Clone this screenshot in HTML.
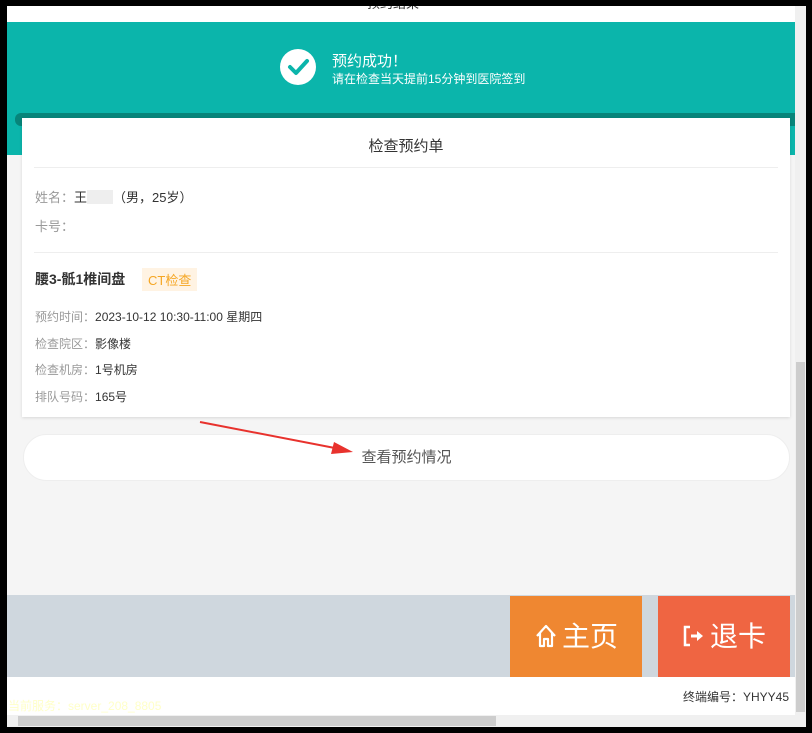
<!DOCTYPE html><html><head><meta charset="utf-8"><style>
*{margin:0;padding:0;box-sizing:border-box}
body{width:812px;height:733px;background:#000;position:relative;overflow:hidden;font-family:"Liberation Sans","Noto Sans CJK SC",sans-serif}
.a{position:absolute}
</style></head><body>
<div class="a" style="left:7px;top:6px;width:788px;height:709px;background:#f5f5f5"></div>
<div class="a" style="left:7px;top:6px;width:788px;height:16px;background:#fff;overflow:hidden"><div class="a" style="left:360px;top:-12px;font-size:13px;color:#333;line-height:20px">预约结果</div></div>
<div class="a" style="left:7px;top:22px;width:788px;height:133px;background:#0bb5ab"></div>
<div class="a" style="left:280px;top:49px;width:36px;height:36px;border-radius:50%;background:#fff"><svg width="36" height="36"><path d="M10 18l6 6 11-12" fill="none" stroke="#0bb5ab" stroke-width="4" stroke-linecap="round" stroke-linejoin="round"/></svg></div>
<div class="a" style="left:332px;top:50px;color:#fff;font-size:15px">预约成功！</div>
<div class="a" style="left:332px;top:70px;color:#fff;font-size:12px">请在检查当天提前15分钟到医院签到</div>
<div class="a" style="left:15px;top:113px;width:780px;height:13px;background:#07857a;border-radius:6px 0 0 6px"></div>
<div class="a" style="left:22px;top:118px;width:768px;height:299px;background:#fff;box-shadow:0 1px 3px rgba(0,0,0,.12)">
<div class="a" style="left:0;top:17px;width:768px;text-align:center;font-size:15px;color:#333">检查预约单</div>
<div class="a" style="left:12px;top:49px;width:744px;height:1px;background:#eee"></div>
<div class="a" style="left:13px;top:69px;font-size:13px;color:#999">姓名：<span style="color:#333">王<span style="display:inline-block;width:26px;height:14px;background:#eee;vertical-align:-2px"></span>（男，25岁）</span></div>
<div class="a" style="left:13px;top:98px;font-size:13px;color:#999">卡号：</div>
<div class="a" style="left:12px;top:134px;width:744px;height:1px;background:#eee"></div>
<div class="a" style="left:13px;top:151px;font-size:14px;font-weight:bold;color:#333">腰3-骶1椎间盘</div>
<div class="a" style="left:120px;top:150px;padding:2px 6px;font-size:13px;color:#f5a623;background:#fff3e3">CT检查</div>
<div class="a" style="left:13px;top:186px;font-size:12px;color:#999;line-height:26.5px">预约时间：<span style="color:#333">2023-10-12 10:30-11:00 星期四</span><br>检查院区：<span style="color:#333">影像楼</span><br>检查机房：<span style="color:#333">1号机房</span><br>排队号码：<span style="color:#333">165号</span></div>
</div>
<div class="a" style="left:23px;top:434px;width:767px;height:47px;background:#fff;border:1px solid #eee;border-radius:24px;text-align:center;line-height:46px;font-size:15px;color:#555">查看预约情况</div>
<svg class="a" style="left:0;top:0" width="812" height="733"><path d="M200 422L340 449" stroke="#e8322d" stroke-width="2"/><path d="M353 452l-19 -10l-3 12z" fill="#e8322d"/></svg>
<div class="a" style="left:7px;top:595px;width:788px;height:82px;background:#cfd7de"></div>
<div class="a" style="left:510px;top:596px;width:132px;height:81px;background:#ef8731;color:#fff;font-size:28px;line-height:81px;text-align:center"><svg width="24" height="26" style="vertical-align:-3px;margin-right:4px"><path d="M3 13L12 3l9 10M6 10v13h4v-7h4v7h4V10" fill="none" stroke="#fff" stroke-width="2.2" stroke-linejoin="round"/></svg>主页</div>
<div class="a" style="left:658px;top:596px;width:132px;height:81px;background:#ef6542;color:#fff;font-size:28px;line-height:81px;text-align:center"><svg width="24" height="26" style="vertical-align:-3px;margin-right:4px"><path d="M8 4H3v18h5" fill="none" stroke="#fff" stroke-width="2.5"/><path d="M9 13h8" stroke="#fff" stroke-width="3"/><path d="M15 8l6 5-6 5z" fill="#fff"/></svg>退卡</div>
<div class="a" style="left:7px;top:677px;width:788px;height:38px;background:#fff"></div>
<div class="a" style="right:23px;top:688px;font-size:12px;color:#333">终端编号：YHYY45</div>
<div class="a" style="left:8px;top:697px;font-size:12px;color:#ffffc8">当前服务：server_208_8805</div>
<div class="a" style="left:795px;top:6px;width:11px;height:709px;background:#f0f0f0"></div>
<div class="a" style="left:796px;top:362px;width:9px;height:350px;background:#cdcdcd"></div>
<div class="a" style="left:7px;top:715px;width:799px;height:12px;background:#f0f0f0"></div>
<div class="a" style="left:18px;top:716px;width:478px;height:10px;background:#cdcdcd"></div>
</body></html>
